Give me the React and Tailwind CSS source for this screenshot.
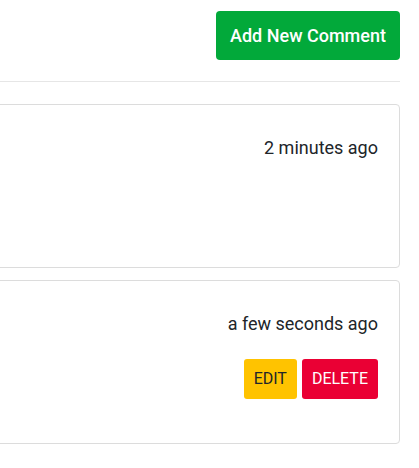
import React from "react";

const comments = [
  { id: 1, time: "2 minutes ago", own: false },
  { id: 2, time: "a few seconds ago", own: true },
];

const App = () => {
  return (
    <div className="min-h-screen bg-white font-['Roboto',sans-serif] text-[#212529] overflow-hidden">
      <div className="w-[400px] pt-[11px]">
        <div className="flex justify-end">
          <button className="h-[49px] w-[184px] rounded-[4px] bg-[#02a93a] text-white text-[18px] font-medium">
            Add New Comment
          </button>
        </div>
        <div className="mt-[21px] border-t border-[#e6e6e6]" />

        <div className="-ml-4 mt-[22px] flex flex-col gap-[12px]">
          {comments.map(c => (
            <div key={c.id} className="h-[164px] rounded-[4px] border border-[#dcdcdc] pr-[21px] pt-[31px] flex flex-col items-end">
              <span className="text-[18px] leading-[24px]">{c.time}</span>
              {c.own && (
                <div className="mt-[23px] flex gap-[5px]">
                  <button className="h-10 px-2.5 rounded-[3px] bg-[#ffc300] text-[16px] text-[#212529]">EDIT</button>
                  <button className="h-10 px-2.5 rounded-[3px] bg-[#ea0034] text-[16px] text-white">DELETE</button>
                </div>
              )}
            </div>
          ))}
        </div>
      </div>
    </div>
  );
};

export default App;
